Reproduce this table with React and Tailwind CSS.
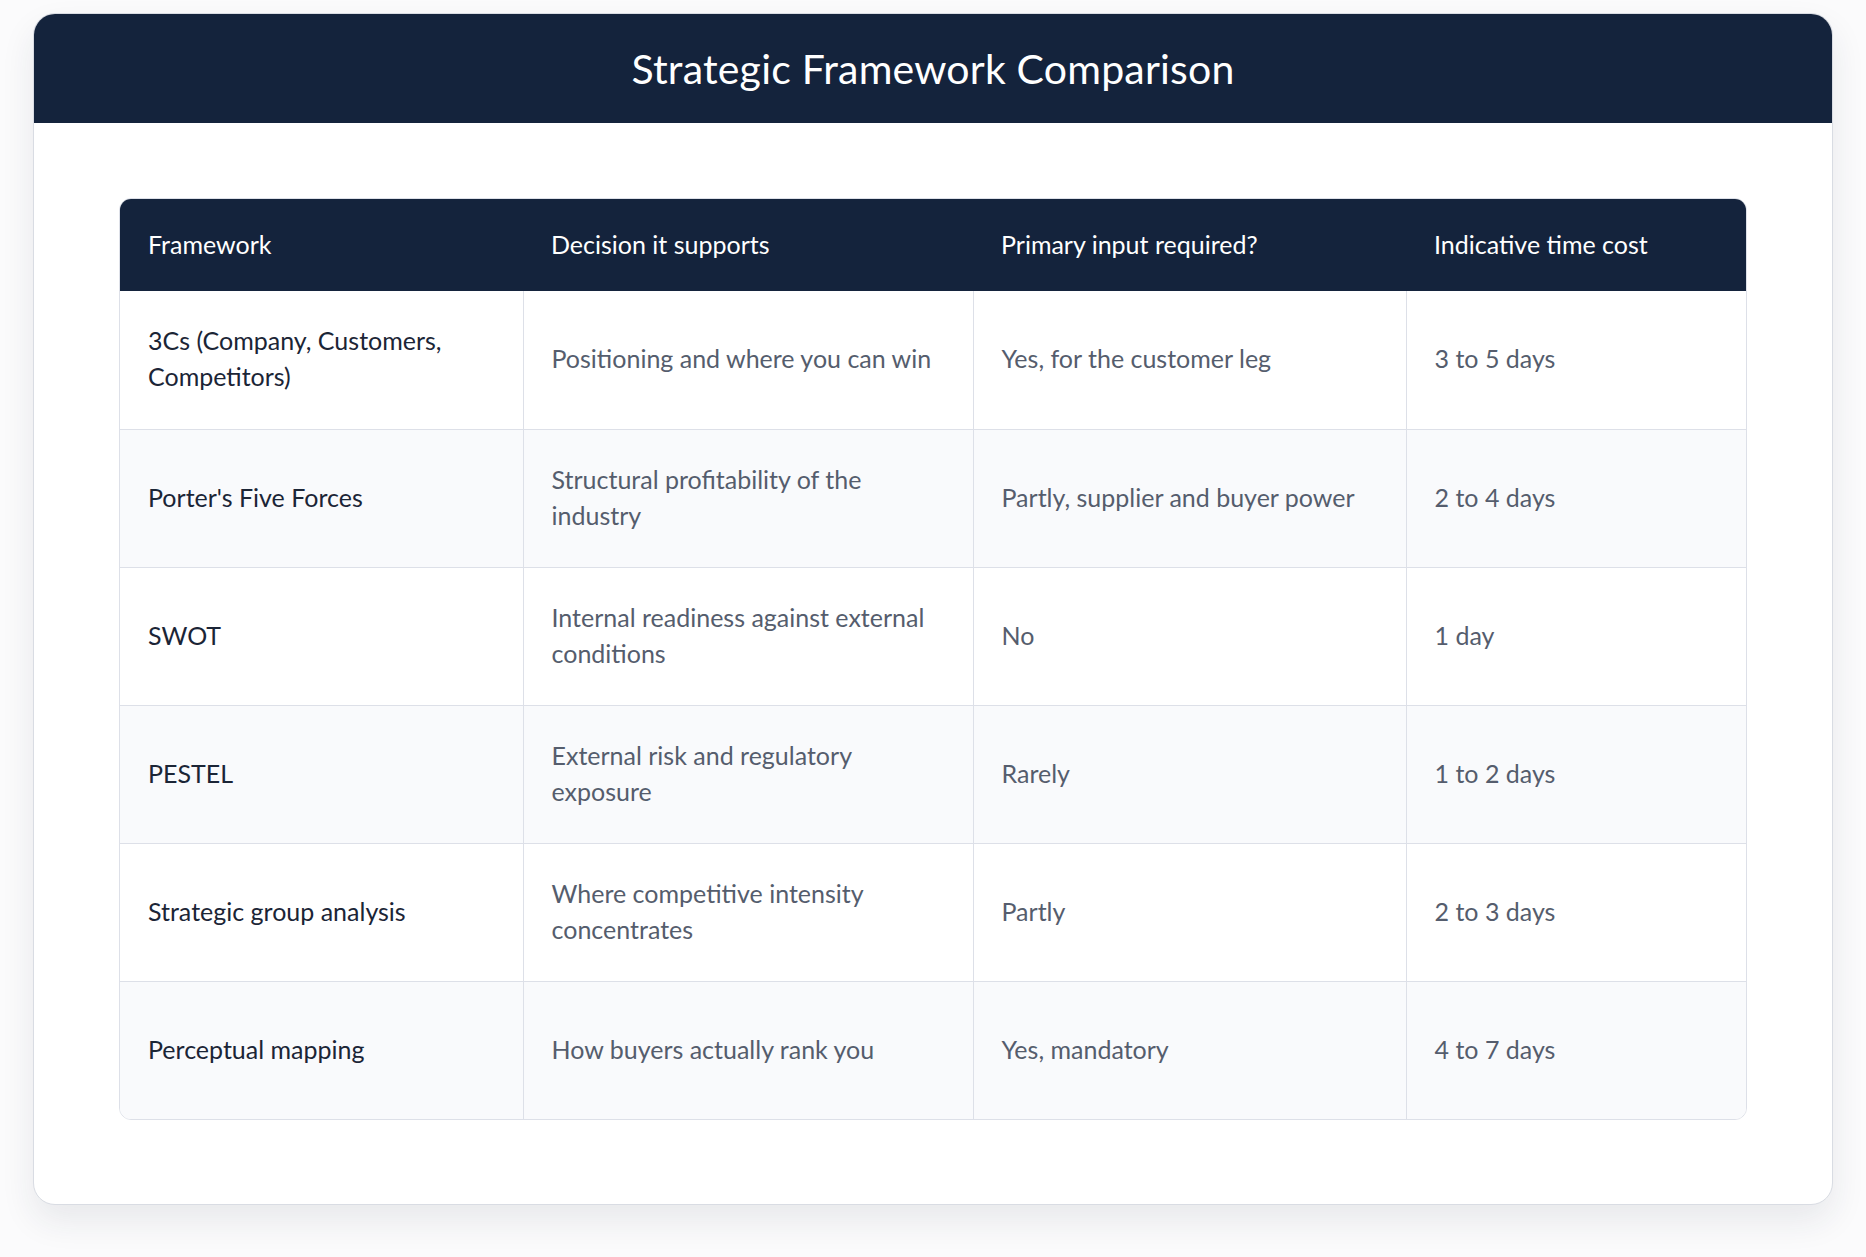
import React from "react";

const rows = [
  ["3Cs (Company, Customers, Competitors)", "Positioning and where you can win", "Yes, for the customer leg", "3 to 5 days"],
  ["Porter's Five Forces", "Structural profitability of the industry", "Partly, supplier and buyer power", "2 to 4 days"],
  ["SWOT", "Internal readiness against external conditions", "No", "1 day"],
  ["PESTEL", "External risk and regulatory exposure", "Rarely", "1 to 2 days"],
  ["Strategic group analysis", "Where competitive intensity concentrates", "Partly", "2 to 3 days"],
  ["Perceptual mapping", "How buyers actually rank you", "Yes, mandatory", "4 to 7 days"],
];

const headers = ["Framework", "Decision it supports", "Primary input required?", "Indicative time cost"];

export default function App() {
  return (
    <div
      className="min-h-[1257px] w-full bg-[#fbfbfc] px-[33px] pt-[13px] pb-[40px]"
      style={{ fontFamily: "Lato, 'Open Sans', sans-serif" }}
    >
      <div className="overflow-hidden rounded-[22px] border border-[#d9dce3] bg-white shadow-[0_16px_34px_rgba(30,40,70,0.09)]">
        <div className="flex h-[109px] items-center justify-center bg-[#14233c]">
          <h1 className="text-[41px] font-normal leading-none tracking-[0.2px] text-white">
            Strategic Framework Comparison
          </h1>
        </div>
        <div className="px-[85px] pt-[75px] pb-[84px]">
          <div className="overflow-hidden rounded-[12px] border border-[#dde0e8]">
            <table className="w-full table-fixed border-collapse text-[25px] leading-[36px]">
              <colgroup>
                <col className="w-[403px]" />
                <col className="w-[450px]" />
                <col className="w-[433px]" />
                <col />
              </colgroup>
              <thead>
                <tr className="h-[92px] bg-[#14233c] text-left text-white">
                  {headers.map((h) => (
                    <th key={h} className="px-[28px] pb-[3px] align-middle font-normal">
                      {h}
                    </th>
                  ))}
                </tr>
              </thead>
              <tbody>
                {rows.map((r, i) => (
                  <tr
                    key={i}
                    className={
                      (i % 2 === 1 ? "bg-[#f9fafc] " : "bg-white ") +
                      (i > 0 ? "border-t border-[#dde0e8]" : "")
                    }
                  >
                    {r.map((c, j) => (
                      <td
                        key={j}
                        className={
                          "h-[138px] px-[28px] pb-[3px] align-middle " +
                          (j === 0
                            ? "text-[#1b2536]"
                            : "border-l border-[#dde0e8] text-[#555d6d]")
                        }
                      >
                        {c}
                      </td>
                    ))}
                  </tr>
                ))}
              </tbody>
            </table>
          </div>
        </div>
      </div>
    </div>
  );
}
